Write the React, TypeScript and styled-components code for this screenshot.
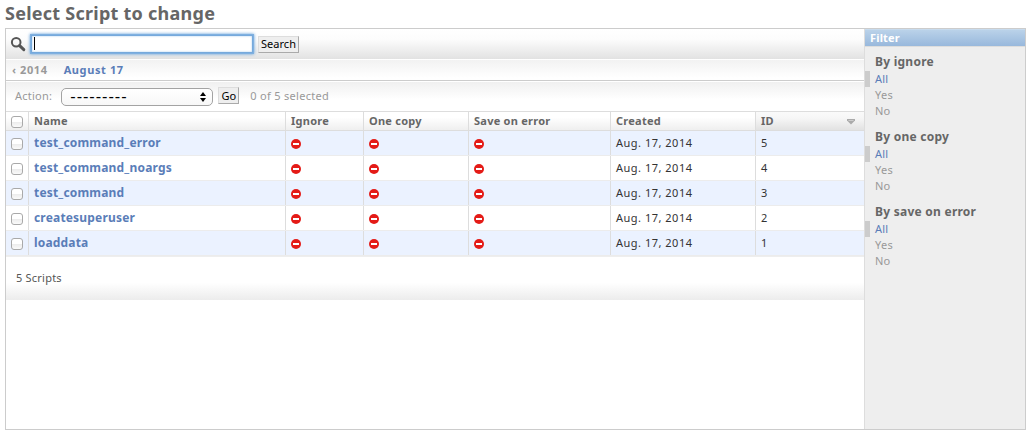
import React from 'react';
import styled, { createGlobalStyle } from 'styled-components';

const link = '#5a7db8';

const GlobalStyle = createGlobalStyle`
  * { box-sizing: border-box; }
  body {
    margin: 0;
    background: #fff;
    color: #333;
    font: 12px/16px "Noto Sans", "Open Sans", sans-serif;
  }
`;

const Page = styled.main`
  height: 437px;
  padding: 0 6px 0 5px;
  overflow: hidden;
`;

const Title = styled.h1`
  height: 28px;
  margin: 0;
  color: #666;
  font-size: 18px;
  line-height: 26px;
  font-weight: 700;
  letter-spacing: 0.25px;
`;

const Panel = styled.div`
  display: grid;
  grid-template-columns: 858px 1fr;
  height: 402px;
  border: 1px solid #ccc;
`;

const Toolbar = styled.form`
  display: flex;
  align-items: center;
  height: 30px;
  padding-left: 4px;
  margin: 0;
  background: linear-gradient(#fff, #fcfcfc 35%, #e2e2e2);
`;

const SearchInput = styled.div`
  width: 222px;
  height: 18px;
  margin: 0 5px;
  padding: 1px 0 0 2px;
  border: 1px solid #76a9dc;
  background: #fff;
  box-shadow: 0 0 0 1px #7fb0e0, 0 0 3px 1px #5a9bd9, inset 0 0 2px #9cc4ea;
`;

const Caret = styled.span`
  display: block;
  width: 1px;
  height: 13px;
  background: #000;
`;

const PushButton = styled.button<{ $width: number }>`
  width: ${(p) => p.$width}px;
  height: 17px;
  padding: 0;
  border: 1px solid;
  border-color: #ddd #aaa #aaa #ddd;
  background: #eee;
  color: #000;
  font: 11px/14px "Noto Sans", sans-serif;
  letter-spacing: 0.05px;
`;

const DateNav = styled.nav`
  display: flex;
  gap: 15px;
  height: 22px;
  padding: 2px 0 0 6px;
  border-top: 1px solid #fff;
  border-bottom: 1px solid #ccc;
  background: linear-gradient(#f2f2f2, #fff 90%);
  font-size: 11px;
  line-height: 16px;
  font-weight: 700;
  letter-spacing: 0.6px;
`;

const DateLink = styled.a<{ $muted?: boolean }>`
  padding-right: ${(p) => (p.$muted ? 1 : 0)}px;
  color: ${(p) => (p.$muted ? '#999' : link)};
`;

const Actions = styled.div`
  display: flex;
  align-items: center;
  height: 30px;
  padding-left: 9px;
  border-top: 1px solid #fff;
  background: linear-gradient(#f0f0f0, #fff 60%);
  color: #999;
  font-size: 11px;
  letter-spacing: 0.25px;
`;

const ActionLabel = styled.label`
  padding-bottom: 2px;
`;

const ActionSelect = styled.div`
  display: flex;
  justify-content: space-between;
  align-items: center;
  width: 152px;
  height: 18px;
  margin: 1px 5px 0 9px;
  padding: 0 6px 0 8px;
  border: 1px solid #a3a3a3;
  border-radius: 5px;
  background: linear-gradient(#fff, #f7f7f7);
  color: #000;
`;

const SelectValue = styled.span`
  font-family: "DejaVu Sans", sans-serif;
  font-size: 15px;
  line-height: 12px;
  letter-spacing: 0.95px;
`;

const GoButton = styled(PushButton)`
  margin-bottom: 2px;
`;

const Counter = styled.span`
  margin-left: 11px;
  padding-bottom: 2px;
  letter-spacing: 0.3px;
`;

const Row = styled.div<{ $shade?: boolean; $head?: boolean }>`
  display: grid;
  grid-template-columns: 23px 257px 78px 105px 142px 145px 108px;
  height: ${(p) => (p.$head ? 20 : 25)}px;
  background: ${(p) =>
    p.$head ? 'linear-gradient(#fff, #fff 30%, #efefef)' : p.$shade ? '#ebf2ff' : '#fff'};
  border-top: ${(p) => (p.$head ? '1px solid #ddd' : '0')};
  border-bottom: 1px solid ${(p) => (p.$head ? '#ddd' : '#ececec')};
`;

const Cell = styled.div`
  padding: 4px 5px 0;
  border-right: 1px solid #ddd;
  font-size: 11px;
  line-height: 16px;
  letter-spacing: 0.5px;
  white-space: nowrap;
  &:last-child { border-right: 0; }
`;

const HeadCell = styled(Cell)<{ $sorted?: boolean }>`
  display: flex;
  justify-content: space-between;
  padding-top: 1px;
  padding-right: 9px;
  color: #666;
  font-weight: 700;
  letter-spacing: 0.25px;
  background: ${(p) => (p.$sorted ? 'linear-gradient(#fafafa, #f6f6f6 35%, #e2e2e2)' : 'none')};
`;

const NameCell = styled(Cell)`
  color: ${link};
  font-size: 12px;
  font-weight: 700;
  letter-spacing: 0.18px;
`;

const IconCell = styled(Cell)`
  padding-top: 8px;
  line-height: 0;
`;

const BoxCell = styled(Cell)<{ $head?: boolean }>`
  padding-top: ${(p) => (p.$head ? 4 : 7)}px;
`;

const CheckBox = styled.span`
  display: block;
  width: 12px;
  height: 12px;
  border: 1px solid #a9a9a9;
  border-radius: 3px;
  background: linear-gradient(#fff 45%, #ededed 55%, #fafafa);
`;

const Paginator = styled.div`
  height: 44px;
  padding: 13px 10px 0;
  border-top: 1px solid #eee;
  background: linear-gradient(#fff 60%, #ececec);
  color: #555;
  font-size: 11px;
  line-height: 16px;
  letter-spacing: 0.22px;
`;

const Sidebar = styled.aside`
  border-left: 1px solid #ddd;
  background: #eee;
`;

const FilterTitle = styled.h2`
  height: 18px;
  margin: 0;
  padding-left: 5px;
  border-top: 1px solid #c7dbee;
  border-bottom: 1px solid #ddd;
  background: linear-gradient(#bad2e9, #98b8dc);
  color: #fff;
  font-size: 11px;
  line-height: 16px;
  font-weight: 700;
  letter-spacing: 0.15px;
`;

const FilterGroup = styled.section`
  height: 75px;
  padding-top: 7px;
`;

const FilterHeading = styled.h3`
  height: 17px;
  margin: 0;
  padding-left: 10px;
  color: #666;
  font-size: 12px;
  line-height: 16px;
  font-weight: 700;
  letter-spacing: 0.25px;
`;

const FilterOption = styled.div<{ $selected?: boolean }>`
  height: 16px;
  padding-left: ${(p) => (p.$selected ? 5 : 10)}px;
  border-left: ${(p) => (p.$selected ? '5px solid #ccc' : '0')};
  color: ${(p) => (p.$selected ? link : '#999')};
  font-size: 11px;
  line-height: 16px;
  letter-spacing: 0.25px;
`;

const SearchIcon = () => (
  <svg width="16" height="16" viewBox="0 0 16 16" fill="none" stroke="#555">
    <circle cx="6.2" cy="6.2" r="4.3" strokeWidth="2" />
    <path d="M9.6 9.6L13.8 13.6" strokeWidth="3" strokeLinecap="round" />
  </svg>
);

const NoIcon = () => (
  <svg width="10" height="10" viewBox="0 0 10 10">
    <circle cx="5" cy="5" r="5" fill="#e41b17" />
    <rect x="2" y="4" width="6" height="2" fill="#fff" />
  </svg>
);

const SelectArrows = () => (
  <svg width="6" height="10" viewBox="0 0 6 10" fill="#000">
    <path d="M3 0L6 4H0zM3 10L6 6H0z" />
  </svg>
);

const SortArrow = () => (
  <svg width="8" height="16" viewBox="0 0 8 16">
    <path d="M0 6h8v1.5L4 11.5L0 7.5z" fill="#aaa" />
    <path d="M1.5 7.5h5" stroke="#ccc" />
  </svg>
);

const scripts = [
  { id: 5, name: 'test_command_error' },
  { id: 4, name: 'test_command_noargs' },
  { id: 3, name: 'test_command' },
  { id: 2, name: 'createsuperuser' },
  { id: 1, name: 'loaddata' },
];

const columns = ['Name', 'Ignore', 'One copy', 'Save on error', 'Created'];
const filters = ['By ignore', 'By one copy', 'By save on error'];

export default function App() {
  return (
    <Page>
      <GlobalStyle />
      <Title>Select Script to change</Title>
      <Panel>
        <div>
          <Toolbar>
            <SearchIcon />
            <SearchInput><Caret /></SearchInput>
            <PushButton type="button" $width={41}>Search</PushButton>
          </Toolbar>
          <DateNav>
            <DateLink $muted>‹ 2014</DateLink>
            <DateLink>August 17</DateLink>
          </DateNav>
          <Actions>
            <ActionLabel>Action:</ActionLabel>
            <ActionSelect><SelectValue>---------</SelectValue><SelectArrows /></ActionSelect>
            <GoButton type="button" $width={21}>Go</GoButton>
            <Counter>0 of 5 selected</Counter>
          </Actions>
          <Row $head>
            <BoxCell $head><CheckBox /></BoxCell>
            {columns.map((c) => <HeadCell key={c}>{c}</HeadCell>)}
            <HeadCell $sorted>ID<SortArrow /></HeadCell>
          </Row>
          {scripts.map((s, i) => (
            <Row key={s.id} $shade={i % 2 === 0}>
              <BoxCell><CheckBox /></BoxCell>
              <NameCell>{s.name}</NameCell>
              <IconCell><NoIcon /></IconCell>
              <IconCell><NoIcon /></IconCell>
              <IconCell><NoIcon /></IconCell>
              <Cell>Aug. 17, 2014</Cell>
              <Cell>{s.id}</Cell>
            </Row>
          ))}
          <Paginator>5 Scripts</Paginator>
        </div>
        <Sidebar>
          <FilterTitle>Filter</FilterTitle>
          {filters.map((f) => (
            <FilterGroup key={f}>
              <FilterHeading>{f}</FilterHeading>
              <FilterOption $selected>All</FilterOption>
              <FilterOption>Yes</FilterOption>
              <FilterOption>No</FilterOption>
            </FilterGroup>
          ))}
        </Sidebar>
      </Panel>
    </Page>
  );
}
